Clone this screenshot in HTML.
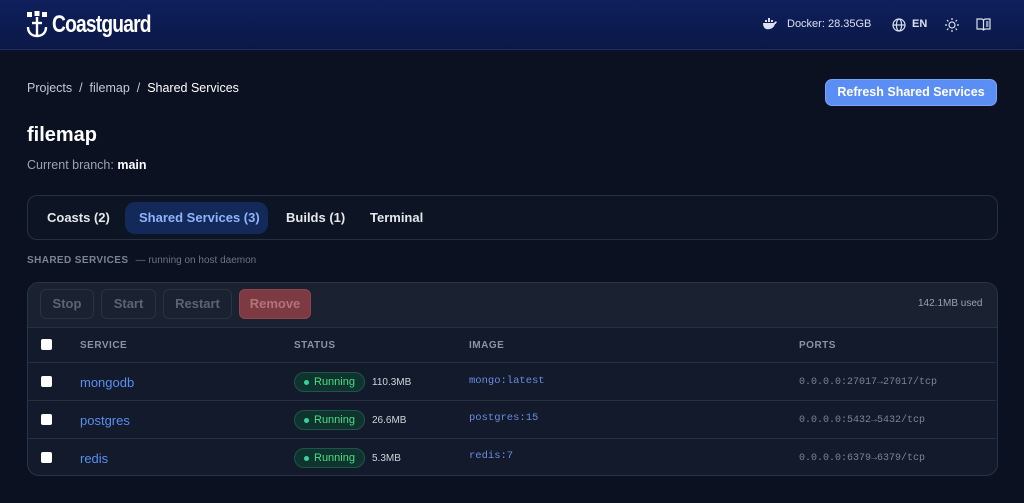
<!DOCTYPE html><html><head><style>
*{box-sizing:border-box;margin:0;padding:0}
body{width:1024px;height:503px;overflow:hidden;background:#0b1120;font-family:"Liberation Sans",sans-serif;color:#e5e7eb;position:relative}
.hdr{position:absolute;left:0;top:0;width:1024px;height:50px;background:linear-gradient(180deg,#0e1f5c,#0b1847);border-bottom:1px solid #1e2d6a}
.abs{position:absolute}
.tab{position:absolute;top:203px;height:30px;line-height:30px;font-size:13px;font-weight:bold;color:#e5e7eb}
.btn{position:absolute;top:289px;height:30px;border:1px solid #2a3342;border-radius:6px;color:#5b6474;font-size:13px;font-weight:bold;text-align:center;line-height:28px}
.row{position:absolute;left:28px;width:968px;border-top:1px solid #263042}
.cb{position:absolute;left:41px;width:11px;height:11px;background:#fff;border-radius:2px}
.svc{position:absolute;left:80px;font-size:13px;color:#5b8ef0}
.pill{position:absolute;left:294px;width:71px;height:20px;border:1px solid #1f5547;background:#0f342f;border-radius:10px;font-size:11px;color:#4ade80;line-height:18px;padding-left:19px}
.pill:before{content:"";position:absolute;left:9px;top:7px;width:5px;height:5px;border-radius:50%;background:#34d399}
.mb{position:absolute;left:372px;font-size:10px;color:#d1d5db}
.img{position:absolute;left:469px;font-family:"Liberation Mono",monospace;font-size:10.5px;color:#6b8cdf}
.port{position:absolute;left:799px;font-family:"Liberation Mono",monospace;font-size:10px;color:#7b8494}
.th{position:absolute;top:340px;font-size:10px;font-weight:bold;color:#8a93a3;letter-spacing:.5px}
</style></head><body>
<div class="hdr">
<svg class="abs" style="left:26px;top:11px" width="22" height="28" viewBox="0 0 22 28"><g fill="#fff"><rect x="1" y="1" width="5" height="5"/><rect x="8.5" y="0" width="5" height="5"/><rect x="16" y="1" width="5" height="5"/></g><g stroke="#fff" stroke-width="2.4" fill="none"><path d="M11 6v18"/><path d="M6 12h10"/><path d="M2 16c0 6 4 9 9 9s9-3 9-9"/></g></svg>
<div class="abs" style="left:52px;top:11px;font-size:24px;font-weight:bold;color:#fff;letter-spacing:-1px;transform:scaleX(.8);transform-origin:left">Coastguard</div>
<svg class="abs" style="left:762px;top:18px" width="16" height="12" viewBox="0 0 16 12"><path fill="#dbe1ee" d="M1 5h11c1-2 2-2 3-1-1 1-1 2-2 2-1 4-5 6-9 5C2 10 1 8 1 5zM3 2h2v2H3zM6 2h2v2H6zM9 2h2v2H9zM6 0h2v2H6z"/></svg>
<div class="abs" style="left:787px;top:18px;font-size:11px;color:#dbe1ee">Docker: 28.35GB</div>
<svg class="abs" style="left:892px;top:18px" width="14" height="14" viewBox="0 0 14 14" fill="none" stroke="#dbe1ee" stroke-width="1.2"><circle cx="7" cy="7" r="6"/><ellipse cx="7" cy="7" rx="2.6" ry="6"/><path d="M1 7h12"/></svg>
<div class="abs" style="left:912px;top:18px;font-size:11px;font-weight:bold;color:#dbe1ee">EN</div>
<svg class="abs" style="left:944px;top:17px" width="16" height="16" viewBox="0 0 16 16" fill="none" stroke="#dbe1ee" stroke-width="1.2"><circle cx="8" cy="8" r="3"/><path d="M8 1v2M8 13v2M1 8h2M13 8h2M3 3l1.4 1.4M11.6 11.6L13 13M3 13l1.4-1.4M11.6 4.4L13 3"/></svg>
<svg class="abs" style="left:976px;top:18px" width="15" height="13" viewBox="0 0 15 13" fill="none" stroke="#dbe1ee" stroke-width="1.2"><path d="M1 1h5l1.5 1L9 1h5v10H9l-1.5 1L6 11H1z"/><path d="M7.5 2v10M10 4h2.5M10 6h2.5M10 8h2.5"/></svg>
</div>
<div class="abs" style="left:27px;top:81px;font-size:12.5px;color:#c3c9d4">Projects &nbsp;/&nbsp; filemap &nbsp;/&nbsp; <span style="color:#fff">Shared Services</span></div>
<div class="abs" style="left:825px;top:79px;width:172px;height:27px;background:#5b8ef5;border:1px solid #7aa4f8;border-radius:7px;color:#fff;font-size:12.5px;font-weight:bold;text-align:center;line-height:25px">Refresh Shared Services</div>
<div class="abs" style="left:27px;top:124px;font-size:20px;font-weight:bold;color:#fff">filemap</div>
<div class="abs" style="left:27px;top:158px;font-size:12.5px;color:#9aa2b1">Current branch: <b style="color:#fff">main</b></div>
<div class="abs" style="left:27px;top:195px;width:971px;height:45px;border:1px solid #263042;border-radius:10px;background:#0d1424"></div>
<div class="tab" style="left:47px">Coasts (2)</div>
<div class="abs" style="left:125px;top:202px;width:143px;height:32px;background:#13295a;border-radius:10px"></div>
<div class="tab" style="left:139px;color:#8fb4fb">Shared Services (3)</div>
<div class="tab" style="left:286px">Builds (1)</div>
<div class="tab" style="left:370px">Terminal</div>
<div class="abs" style="left:27px;top:255px;font-size:10px;font-weight:bold;color:#7b8494;letter-spacing:.4px">SHARED SERVICES <span style="font-weight:normal;letter-spacing:0;color:#6b7383;margin-left:4px">— running on host daemon</span></div>
<div class="abs" style="left:27px;top:282px;width:971px;height:194px;border:1px solid #2a3446;border-radius:12px;background:#121a2b;overflow:hidden">
<div style="position:absolute;left:0;top:0;width:100%;height:45px;background:#1a2232;border-bottom:1px solid #263042"></div>
</div>
<div class="btn" style="left:40px;width:54px">Stop</div>
<div class="btn" style="left:101px;width:55px">Start</div>
<div class="btn" style="left:163px;width:69px">Restart</div>
<div class="btn" style="left:239px;width:72px;background:#7e3a43;border-color:#8c444d;color:#b0747c">Remove</div>
<div class="abs" style="left:918px;top:298px;font-size:10px;color:#9aa2b1">142.1MB used</div>
<div class="cb" style="top:339px"></div>
<div class="th" style="left:80px">SERVICE</div><div class="th" style="left:294px">STATUS</div><div class="th" style="left:469px">IMAGE</div><div class="th" style="left:799px">PORTS</div>
<div class="row" style="top:362px"></div><div class="row" style="top:400px"></div><div class="row" style="top:438px"></div>
<div class="cb" style="top:376px"></div><div class="svc" style="top:375px">mongodb</div><div class="pill" style="top:372px">Running</div><div class="mb" style="top:377px">110.3MB</div><div class="img" style="top:375px">mongo:latest</div><div class="port" style="top:377px">0.0.0.0:27017→27017/tcp</div>
<div class="cb" style="top:414px"></div><div class="svc" style="top:413px">postgres</div><div class="pill" style="top:410px">Running</div><div class="mb" style="top:415px">26.6MB</div><div class="img" style="top:412px">postgres:15</div><div class="port" style="top:415px">0.0.0.0:5432→5432/tcp</div>
<div class="cb" style="top:452px"></div><div class="svc" style="top:451px">redis</div><div class="pill" style="top:448px">Running</div><div class="mb" style="top:453px">5.3MB</div><div class="img" style="top:450px">redis:7</div><div class="port" style="top:453px">0.0.0.0:6379→6379/tcp</div>
</body></html>
